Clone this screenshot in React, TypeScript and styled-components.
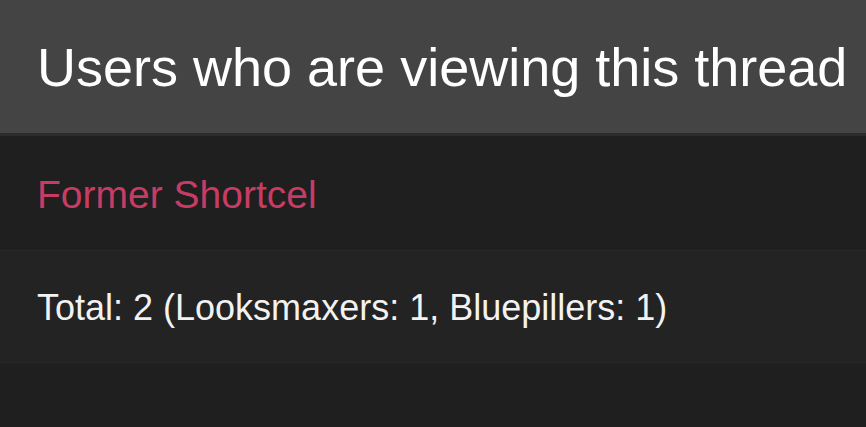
import React from 'react';
import styled, { createGlobalStyle } from 'styled-components';

const GlobalStyle = createGlobalStyle`
  html, body {
    margin: 0;
    padding: 0;
    background: #1f1f1f;
    font-family: "Liberation Sans", Arial, Helvetica, sans-serif;
  }
`;

const Block = styled.section`
  width: 100%;
  min-height: 100vh;
  background: #1f1f1f;
`;

const Header = styled.h3`
  margin: 0;
  height: 133px;
  padding: 0 37px;
  display: flex;
  align-items: center;
  background: #444444;
  border-bottom: 3px solid #2b2b2b;
  color: #ffffff;
  font-size: 54px;
  font-weight: normal;
  white-space: nowrap;
  overflow: hidden;
`;

const Row = styled.div<{ $alt?: boolean }>`
  height: ${({ $alt }) => ($alt ? '111px' : '114px')};
  padding: 0 37px;
  display: flex;
  align-items: center;
  background: ${({ $alt }) => ($alt ? '#232323' : '#1f1f1f')};
  border-bottom: 1px solid #282828;
`;

const UserLink = styled.a`
  color: #c73c64;
  font-size: 39px;
  text-decoration: none;
  padding-top: 4px;
`;

const Totals = styled.span`
  color: #f2f2f2;
  font-size: 36px;
  padding-top: 2px;
`;

const App: React.FC = () => (
  <>
    <GlobalStyle />
    <Block>
      <Header>Users who are viewing this thread</Header>
      <Row>
        <UserLink href="#">Former Shortcel</UserLink>
      </Row>
      <Row $alt>
        <Totals>Total: 2 (Looksmaxers: 1, Bluepillers: 1)</Totals>
      </Row>
    </Block>
  </>
);

export default App;
